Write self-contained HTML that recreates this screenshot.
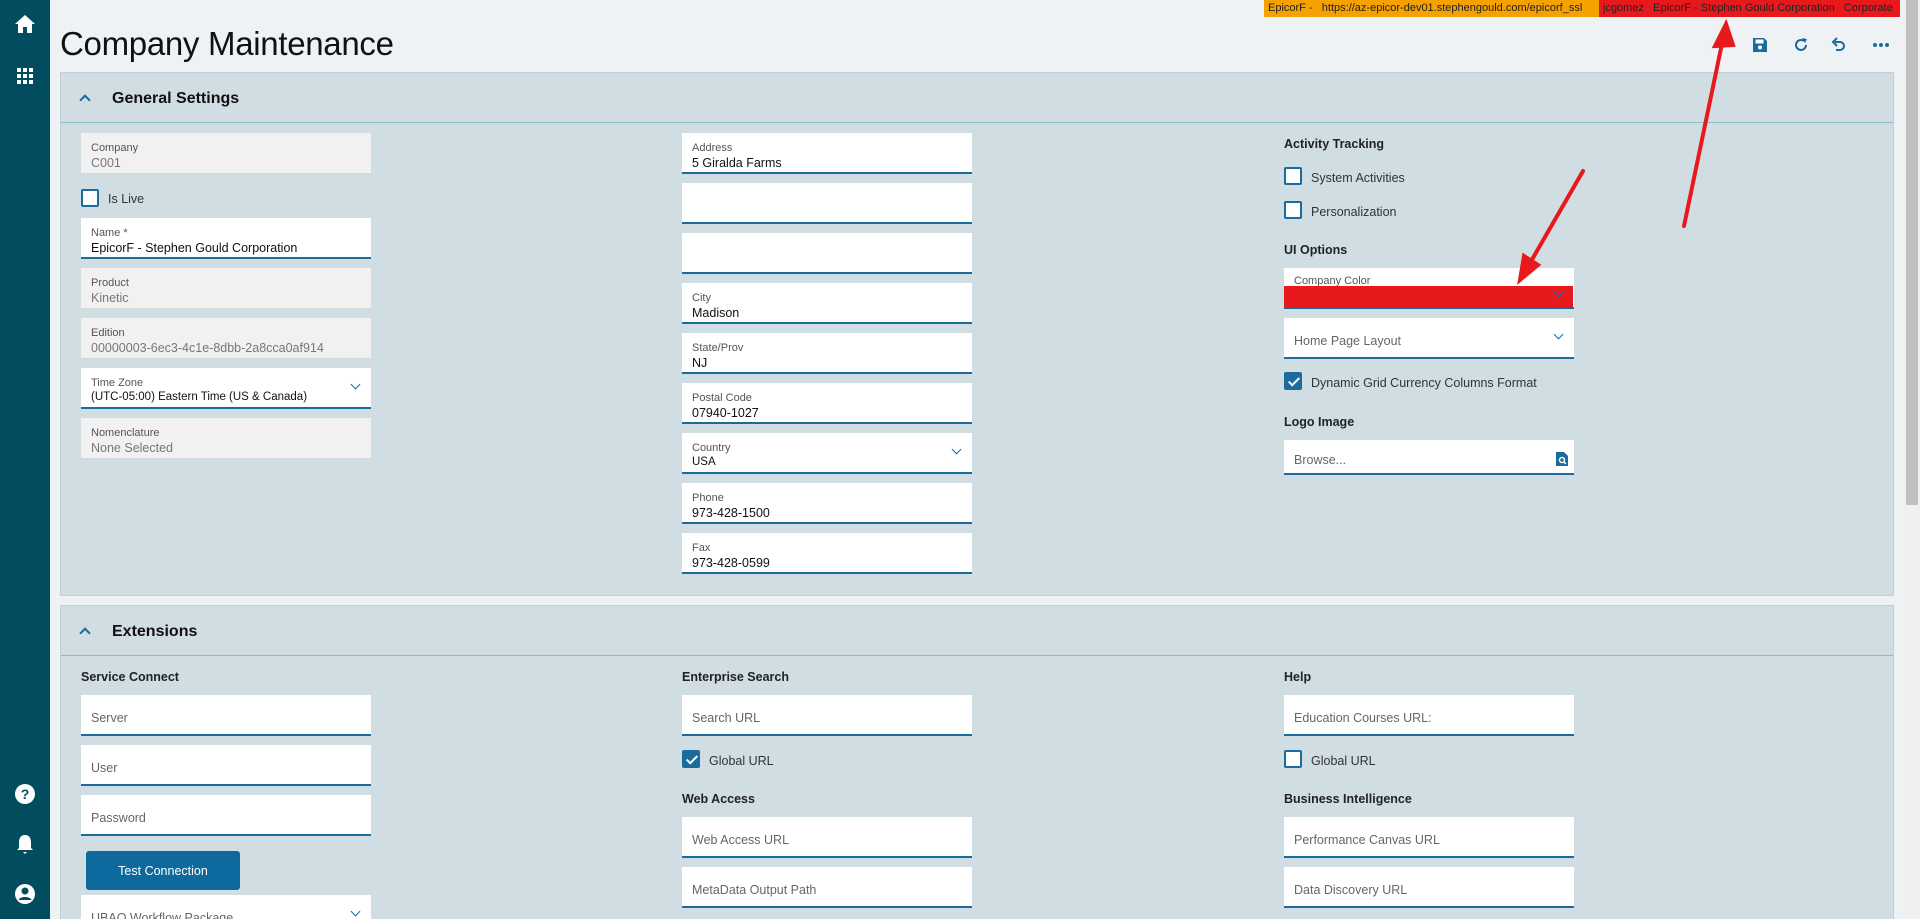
<!DOCTYPE html>
<html style="overflow:hidden;height:919px"><head><meta charset="utf-8"><style>
*{box-sizing:border-box;margin:0;padding:0}
body{width:1920px;height:919px;overflow:hidden;background:#eef2f5;font-family:"Liberation Sans",sans-serif;position:relative;color:#222}
.side{position:absolute;left:0;top:0;width:50px;height:919px;background:#024c5f}
.ic{position:absolute;left:13px}
.top{position:absolute;top:0;height:17px;font-size:11px;line-height:17px;color:#222;white-space:nowrap}
h1{position:absolute;left:60px;top:25px;font-weight:normal;font-size:33px;color:#111;letter-spacing:-0.3px}
.panel{position:absolute;left:60px;width:1834px;background:#d0dde2;border:1px solid #c3cfd4}
.ph{position:absolute;left:0;right:0;top:0;height:50px;border-bottom:1px solid #8cbcc8}
.ph span{position:absolute;left:51px;top:17px;font-size:16px;font-weight:bold;color:#111}
.ph i{position:absolute;left:20px;top:23px;width:8px;height:8px;border-left:2px solid #1a6a9a;border-top:2px solid #1a6a9a;transform:rotate(45deg)}
.f{position:absolute;width:290px;height:41px;background:#fff;border-bottom:2px solid #1b6b9c}
.f.d{background:#f1f1f1;border-bottom:1px solid #d6d6d6}
.f .l{position:absolute;left:10px;top:9px;font-size:11px;color:#555}
.f .v{position:absolute;left:10px;top:23px;font-size:12.5px;color:#111}
.f.d .v{color:#777}
.f .p{position:absolute;left:10px;top:16px;font-size:12.5px;color:#666}
.f .ch{position:absolute;right:12px;top:13px;width:7px;height:7px;border-right:1.5px solid #1b6b9c;border-bottom:1.5px solid #1b6b9c;transform:rotate(45deg)}
.cb{position:absolute;width:18px;height:18px;border:2px solid #1b6b9c;background:#fff;border-radius:2px}
.cb.on{background:#1b6b9c}
.cb.on:after{content:"";position:absolute;left:5px;top:1px;width:4px;height:9px;border-right:2px solid #fff;border-bottom:2px solid #fff;transform:rotate(45deg)}
.ct{position:absolute;font-size:12.5px;color:#333}
.sec{position:absolute;font-size:12.5px;font-weight:bold;color:#222}
.btn{position:absolute;left:86px;top:851px;width:154px;height:39px;background:#0e6a9e;border-radius:3px;color:#fff;font-size:12.5px;text-align:center;line-height:41px}
</style></head><body>
<div class="side">
<svg class="ic" style="top:13px" width="24" height="22" viewBox="0 0 24 22"><path d="M12 2 L2 11 H5 V20 H10 V14 H14 V20 H19 V11 H22 Z" fill="#fff"/></svg>
<svg class="ic" style="top:66px" width="24" height="20" viewBox="0 0 24 20"><g fill="#fff"><rect x="4" y="2" width="4" height="4"/><rect x="10" y="2" width="4" height="4"/><rect x="16" y="2" width="4" height="4"/><rect x="4" y="8" width="4" height="4"/><rect x="10" y="8" width="4" height="4"/><rect x="16" y="8" width="4" height="4"/><rect x="4" y="14" width="4" height="4"/><rect x="10" y="14" width="4" height="4"/><rect x="16" y="14" width="4" height="4"/></g></svg>
<svg class="ic" style="top:782px" width="24" height="24" viewBox="0 0 24 24"><circle cx="12" cy="12" r="10" fill="#fff"/><text x="12" y="17" font-size="14" font-weight="bold" text-anchor="middle" fill="#024c5f" font-family="Liberation Sans">?</text></svg>
<svg class="ic" style="top:832px" width="24" height="24" viewBox="0 0 24 24"><path d="M12 3 C7 3 6 7 6 11 V16 L4 18 H20 L18 16 V11 C18 7 17 3 12 3Z M10 20 H14 L12 22Z" fill="#fff"/></svg>
<svg class="ic" style="top:882px" width="24" height="24" viewBox="0 0 24 24"><circle cx="12" cy="12" r="10" fill="#fff"/><circle cx="12" cy="9" r="3.5" fill="#024c5f"/><path d="M5.5 18 C7 14 17 14 18.5 18 Z" fill="#024c5f"/></svg>
</div>
<div class="top" style="left:1264px;width:335px;background:#f5a100;padding-left:4px">EpicorF - &nbsp;&nbsp;https://az-epicor-dev01.stephengould.com/epicorf_ssl</div>
<div class="top" style="left:1599px;width:301px;background:#e8191d;padding-left:4px">jcgomez &nbsp;&nbsp;EpicorF - Stephen Gould Corporation &nbsp;&nbsp;Corporate</div>
<div style="position:absolute;left:1904px;top:0;width:16px;height:919px;background:#f0f0f0"></div>
<div style="position:absolute;left:1906px;top:0;width:12px;height:505px;background:#c1c1c1"></div>
<h1>Company Maintenance</h1>
<svg style="position:absolute;left:1752px;top:37px" width="16" height="16" viewBox="0 0 16 16"><path d="M1 1 H12 L15 4 V15 H1Z" fill="#1b6b9c"/><rect x="3.5" y="2.5" width="8" height="4" fill="#fff"/><circle cx="8" cy="10.5" r="2" fill="#fff"/></svg>
<svg style="position:absolute;left:1792px;top:36px" width="18" height="18" viewBox="0 0 18 18"><path d="M14 9 A5 5 0 1 1 12 5" fill="none" stroke="#1b6b9c" stroke-width="2"/><path d="M10 2 L15 3 L13 7Z" fill="#1b6b9c"/></svg>
<svg style="position:absolute;left:1830px;top:36px" width="18" height="18" viewBox="0 0 18 18"><path d="M5 6 H10 A4 4 0 0 1 10 14 H6" fill="none" stroke="#1b6b9c" stroke-width="2"/><path d="M7 2 L3 6 L7 10" fill="none" stroke="#1b6b9c" stroke-width="2"/></svg>
<svg style="position:absolute;left:1872px;top:41px" width="18" height="8" viewBox="0 0 18 8"><circle cx="3" cy="4" r="2" fill="#1b6b9c"/><circle cx="9" cy="4" r="2" fill="#1b6b9c"/><circle cx="15" cy="4" r="2" fill="#1b6b9c"/></svg>

<div class="panel" style="top:72px;height:524px"><div class="ph"><i></i><span>General Settings</span></div></div>
<div class="panel" style="top:605px;height:314px;border-bottom:none"><div class="ph"><i></i><span>Extensions</span></div></div>

<div class="f d" style="left:81px;top:133px"><div class="l">Company</div><div class="v">C001</div></div>
<div class="cb" style="left:81px;top:189px"></div><div class="ct" style="left:108px;top:192px">Is Live</div>
<div class="f" style="left:81px;top:218px"><div class="l">Name *</div><div class="v">EpicorF - Stephen Gould Corporation</div></div>
<div class="f d" style="left:81px;top:268px"><div class="l">Product</div><div class="v">Kinetic</div></div>
<div class="f d" style="left:81px;top:318px"><div class="l">Edition</div><div class="v">00000003-6ec3-4c1e-8dbb-2a8cca0af914</div></div>
<div class="f" style="left:81px;top:368px"><div class="l">Time Zone</div><div class="v" style="font-size:11.5px">(UTC-05:00) Eastern Time (US &amp; Canada)</div><div class="ch"></div></div>
<div class="f d" style="left:81px;top:418px"><div class="l">Nomenclature</div><div class="v">None Selected</div></div>

<div class="f" style="left:682px;top:133px"><div class="l">Address</div><div class="v">5 Giralda Farms</div></div>
<div class="f" style="left:682px;top:183px"></div>
<div class="f" style="left:682px;top:233px"></div>
<div class="f" style="left:682px;top:283px"><div class="l">City</div><div class="v">Madison</div></div>
<div class="f" style="left:682px;top:333px"><div class="l">State/Prov</div><div class="v">NJ</div></div>
<div class="f" style="left:682px;top:383px"><div class="l">Postal Code</div><div class="v">07940-1027</div></div>
<div class="f" style="left:682px;top:433px"><div class="l">Country</div><div class="v" style="font-size:11.5px">USA</div><div class="ch"></div></div>
<div class="f" style="left:682px;top:483px"><div class="l">Phone</div><div class="v">973-428-1500</div></div>
<div class="f" style="left:682px;top:533px"><div class="l">Fax</div><div class="v">973-428-0599</div></div>

<div class="sec" style="left:1284px;top:137px">Activity Tracking</div>
<div class="cb" style="left:1284px;top:167px"></div><div class="ct" style="left:1311px;top:171px">System Activities</div>
<div class="cb" style="left:1284px;top:201px"></div><div class="ct" style="left:1311px;top:205px">Personalization</div>
<div class="sec" style="left:1284px;top:243px">UI Options</div>
<div class="f" style="left:1284px;top:268px"><div class="l" style="top:7px">Company Color</div><div style="position:absolute;left:0;top:18px;width:289px;height:22px;background:#e8191d"></div><div class="ch" style="top:21px"></div></div>
<div class="f" style="left:1284px;top:318px"><div class="p">Home Page Layout</div><div class="ch"></div></div>
<div class="cb on" style="left:1284px;top:372px"></div><div class="ct" style="left:1311px;top:376px">Dynamic Grid Currency Columns Format</div>
<div class="sec" style="left:1284px;top:415px">Logo Image</div>
<div class="f" style="left:1284px;top:440px;height:35px"><div class="p" style="top:13px">Browse...</div><svg style="position:absolute;right:6px;top:12px" width="12" height="14" viewBox="0 0 12 14"><path d="M0 0 H8 L12 4 V14 H0Z" fill="#1b6b9c"/><circle cx="6" cy="8" r="2.5" fill="none" stroke="#fff" stroke-width="1.5"/><path d="M8 10 L10 12" stroke="#fff" stroke-width="1.5"/></svg></div>

<div class="sec" style="left:81px;top:670px">Service Connect</div>
<div class="f" style="left:81px;top:695px"><div class="p">Server</div></div>
<div class="f" style="left:81px;top:745px"><div class="p">User</div></div>
<div class="f" style="left:81px;top:795px"><div class="p">Password</div></div>
<div class="btn">Test Connection</div>
<div class="f" style="left:81px;top:895px"><div class="p">UBAQ Workflow Package</div><div class="ch"></div></div>
<div class="sec" style="left:682px;top:670px">Enterprise Search</div>
<div class="f" style="left:682px;top:695px"><div class="p">Search URL</div></div>
<div class="cb on" style="left:682px;top:750px"></div><div class="ct" style="left:709px;top:754px">Global URL</div>
<div class="sec" style="left:682px;top:792px">Web Access</div>
<div class="f" style="left:682px;top:817px"><div class="p">Web Access URL</div></div>
<div class="f" style="left:682px;top:867px"><div class="p">MetaData Output Path</div></div>
<div class="sec" style="left:1284px;top:670px">Help</div>
<div class="f" style="left:1284px;top:695px"><div class="p">Education Courses URL:</div></div>
<div class="cb" style="left:1284px;top:750px"></div><div class="ct" style="left:1311px;top:754px">Global URL</div>
<div class="sec" style="left:1284px;top:792px">Business Intelligence</div>
<div class="f" style="left:1284px;top:817px"><div class="p">Performance Canvas URL</div></div>
<div class="f" style="left:1284px;top:867px"><div class="p">Data Discovery URL</div></div>

<svg style="position:absolute;left:0;top:0" width="1920" height="919"><g stroke="#e8191d" stroke-width="4" fill="#e8191d" stroke-linecap="round">
<line x1="1684" y1="226" x2="1724" y2="34"/><path d="M1726 24 L1715 46 L1733 45Z"/>
<line x1="1583" y1="171" x2="1526" y2="270"/><path d="M1520 280 L1524 256 L1538 265Z"/></g></svg>
</body></html>
